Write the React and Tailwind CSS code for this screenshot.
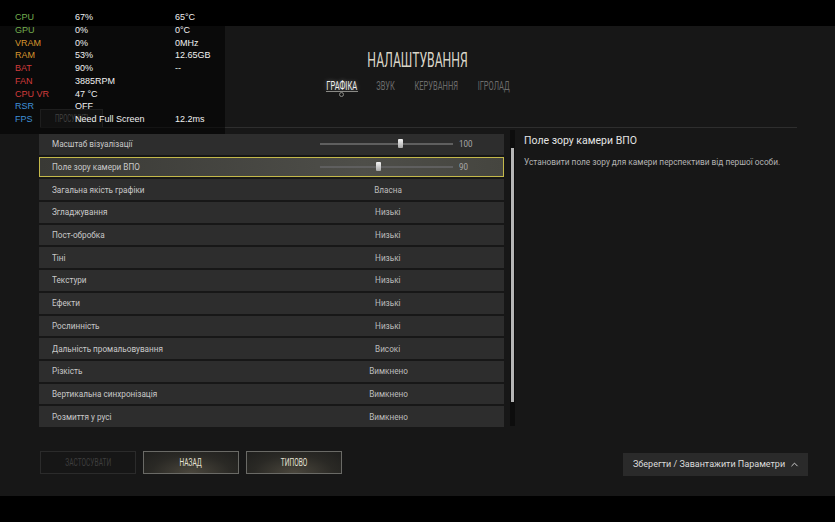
import { ChevronUp } from "lucide-react";

const stats = [
  ["CPU", "67%", "65°C", "text-[#74ad4e]"],
  ["GPU", "0%", "0°C", "text-[#74ad4e]"],
  ["VRAM", "0%", "0MHz", "text-[#d8952e]"],
  ["RAM", "53%", "12.65GB", "text-[#d8952e]"],
  ["BAT", "90%", "--", "text-[#d23c3c]"],
  ["FAN", "3885RPM", "", "text-[#d23c3c]"],
  ["CPU VR", "47 °C", "", "text-[#d23c3c]"],
  ["RSR", "OFF", "", "text-[#3f8fd8]"],
  ["FPS", "Need Full Screen", "12.2ms", "text-[#3f8fd8]"],
];

const rows = [
  { l: "Масштаб візуалізації", s: "100", pos: 80.5 },
  { l: "Поле зору камери ВПО", s: "90", pos: 58, sel: true },
  { l: "Загальна якість графіки", v: "Власна" },
  { l: "Згладжування", v: "Низькі" },
  { l: "Пост-обробка", v: "Низькі" },
  { l: "Тіні", v: "Низькі" },
  { l: "Текстури", v: "Низькі" },
  { l: "Ефекти", v: "Низькі" },
  { l: "Рослинність", v: "Низькі" },
  { l: "Дальність промальовування", v: "Високі" },
  { l: "Різкість", v: "Вимкнено" },
  { l: "Вертикальна синхронізація", v: "Вимкнено" },
  { l: "Розмиття у русі", v: "Вимкнено" },
];

const tabs = [
  { t: "ГРАФІКА", w: "w-[32px]", active: true },
  { t: "ЗВУК", w: "w-[19px]" },
  { t: "КЕРУВАННЯ", w: "w-[44px]" },
  { t: "ІГРОЛАД", w: "w-[32px]" },
];

function Row({ r }) {
  return (
    <div
      className={
        "h-[20.7px] flex items-center border " +
        (r.sel
          ? "border-[#c4b94a] bg-[linear-gradient(to_right,#393935,#4e4e49_70%,#45453f)]"
          : "border-transparent bg-[#2d2d2d]")
      }
    >
      <div className="w-[280px] pl-[12px] flex items-center">
        <span className="inline-block origin-left scale-x-[0.86] text-[9.5px] leading-[12px] text-[#c9c9c9] whitespace-nowrap">
          {r.l}
        </span>
      </div>
      {r.s ? (
        <div className="flex items-center">
          <div className="relative w-[133px] h-[2px] bg-[#5f5f5f]">
            <div
              className="absolute top-[-4px] w-[5px] h-[9px] rounded-[1px] bg-[linear-gradient(#f4f4f4,#a8a8a8)]"
              style={{ left: r.pos - 2.5 }}
            />
          </div>
          <span className="ml-[6px] inline-block origin-left scale-x-[0.84] text-[9.5px] leading-[12px] text-[#a9a9a9]">
            {r.s}
          </span>
        </div>
      ) : (
        <div className="w-[136px] flex justify-center">
          <span className="inline-block scale-x-[0.86] text-[9.5px] leading-[12px] text-[#bdbdbd] whitespace-nowrap">
            {r.v}
          </span>
        </div>
      )}
    </div>
  );
}

function Btn({ children, disabled }) {
  return (
    <div
      className={
        "w-[96px] h-[23px] border flex items-center justify-center " +
        (disabled
          ? "border-[#2b2b2b] bg-[#161616] text-[#3e3e3e]"
          : "border-[#6a6a66] bg-[radial-gradient(ellipse_at_bottom,#4b473d_0%,#2a2925_60%,#1f1f1d_100%)] text-[#e6e2d5]")
      }
    >
      <span className="inline-block scale-x-[0.6] text-[11px] leading-[13px] whitespace-nowrap">
        {children}
      </span>
    </div>
  );
}

export default function App() {
  return (
    <div className="relative w-[835px] h-[522px] overflow-hidden bg-black font-[Roboto,sans-serif]">
      <div className="h-[26px] bg-black" />
      <div className="h-[470px] bg-[#171717] flex flex-col">
        <div className="mt-[22px] h-[24px] flex items-center justify-center">
          <span className="inline-block scale-x-[0.58] text-[21px] leading-[24px] text-[#dad6c9] whitespace-nowrap">
            НАЛАШТУВАННЯ
          </span>
        </div>
        <div className="mt-[4px] h-[19px] flex justify-center gap-[19px]">
          {tabs.map((t) => (
            <div key={t.t} className={t.w + " relative flex justify-center"}>
              <span
                className={
                  "inline-block scale-x-[0.6] text-[12.5px] leading-[19px] whitespace-nowrap " +
                  (t.active
                    ? "text-[#f0f0f0] [text-shadow:0_0_6px_rgba(255,255,255,0.45)]"
                    : "text-[#6b6b6b]")
                }
              >
                {t.t}
              </span>
              {t.active && (
                <>
                  <div className="absolute left-0 right-0 top-[15px] h-px bg-[#8a8a86]" />
                  <div className="absolute left-[13.5px] top-[16px] w-[5px] h-[5px] rounded-full border border-[#8a8a86] bg-[#171717]" />
                </>
              )}
            </div>
          ))}
        </div>
        <div className="mt-[14px] ml-[40px] w-[757px] h-[19px] border-b border-[#2e2e2e] flex">
          <div className="w-[63px] h-full border border-b-0 border-[#444] bg-[#262626] flex items-center justify-center">
            <span className="inline-block scale-x-[0.6] text-[10px] leading-[12px] text-[#8c8c8c] whitespace-nowrap">
              ПРОСУНУТІ
            </span>
          </div>
        </div>
        <div className="mt-[6px] flex items-start">
          <div className="ml-[39px] w-[465px] flex flex-col gap-[2px]">
            {rows.map((r) => (
              <Row key={r.l} r={r} />
            ))}
          </div>
          <div className="ml-[6px] -mt-[4px] w-[5px] h-[296px] bg-[#0d0d0d] flex justify-center">
            <div className="mt-[18px] w-[3px] h-[254px] bg-[#b5b5b5]" />
          </div>
          <div className="ml-[9px] w-[275px]">
            <div className="text-[10.5px] leading-[14px] text-[#e4e4e4] whitespace-nowrap">
              Поле зору камери ВПО
            </div>
            <div className="mt-[8px] text-[8.3px] leading-[12px] text-[#b3b3b3] whitespace-nowrap">
              Установити поле зору для камери перспективи від першої особи.
            </div>
          </div>
        </div>
        <div className="mt-[24px] flex items-start">
          <div className="ml-[40px] flex gap-[7px]">
            <Btn disabled>ЗАСТОСУВАТИ</Btn>
            <Btn>НАЗАД</Btn>
            <Btn>ТИПОВО</Btn>
          </div>
          <div className="ml-auto mr-[27px] mt-[2px] w-[185px] h-[23px] bg-[#2a2a2a] flex items-center pl-[10px]">
            <span className="text-[9px] leading-[12px] text-[#dcdcdc] whitespace-nowrap">
              Зберегти / Завантажити Параметри
            </span>
            <ChevronUp className="ml-[4px] text-[#dcdcdc]" size={11} strokeWidth={2} />
          </div>
        </div>
      </div>
      <div className="h-[26px] bg-black" />

      <div className="absolute left-0 top-0 w-[225px] h-[134px] bg-black/55 pt-[11px] font-['Liberation_Sans',Arial,sans-serif] text-[9px]">
        {stats.map(([a, b, c, col]) => (
          <div key={a} className="h-[12.75px] leading-[12.75px] flex whitespace-nowrap">
            <div className={"pl-[15px] w-[75px] " + col}>{a}</div>
            <div className="w-[100px] text-[#f0f0f0]">{b}</div>
            <div className="text-[#f0f0f0]">{c}</div>
          </div>
        ))}
      </div>
    </div>
  );
}
